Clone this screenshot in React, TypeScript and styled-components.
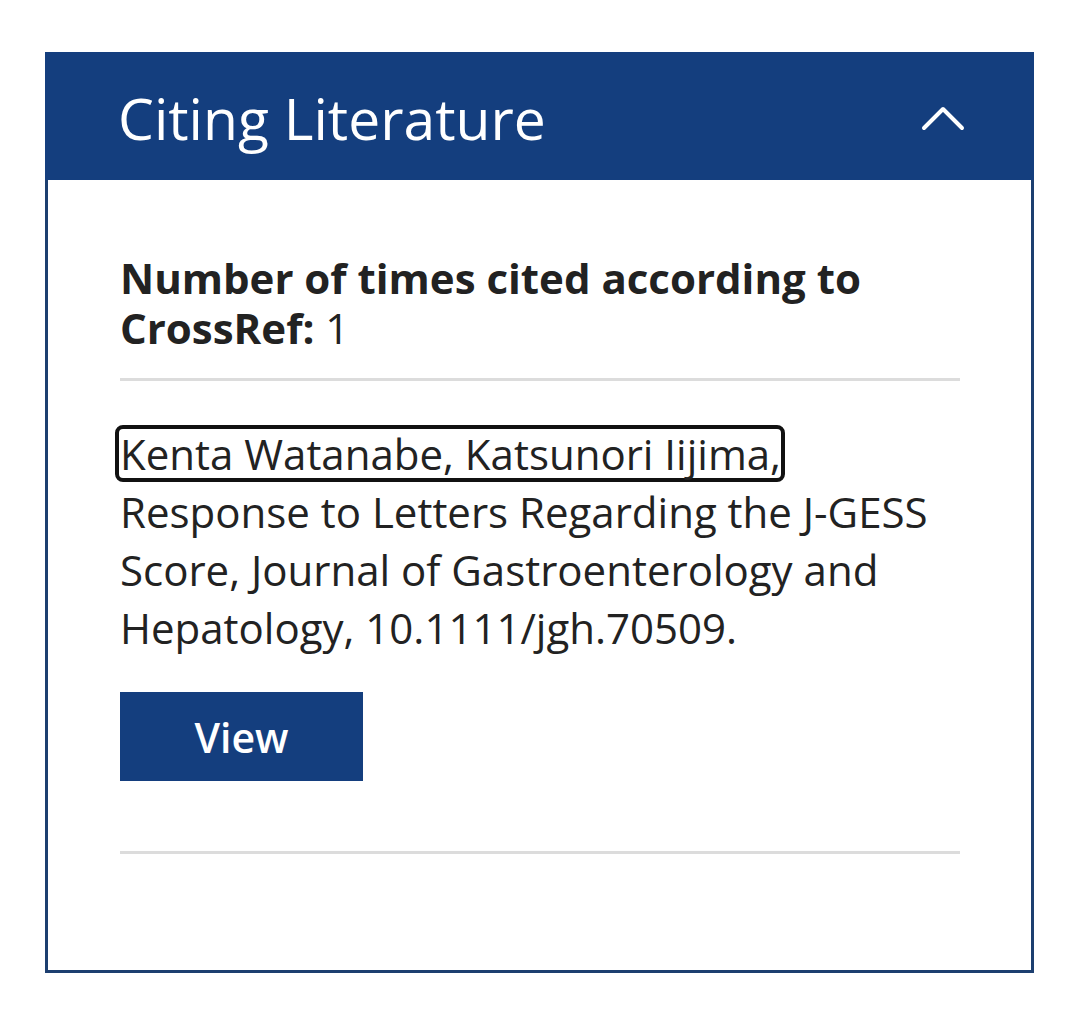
import { createGlobalStyle } from 'styled-components';
import styled from 'styled-components';

const GlobalStyle = createGlobalStyle`
  html, body {
    margin: 0;
    padding: 0;
    background: #ffffff;
  }
  body {
    font-family: 'Open Sans', 'Noto Sans', sans-serif;
    color: #222222;
  }
`;

const Page = styled.div`
  padding: 52px 46px 40px 45px;
`;

const Card = styled.section`
  border: 3px solid #1d3f70;
  background: #ffffff;
`;

const Header = styled.header`
  display: flex;
  align-items: center;
  justify-content: space-between;
  height: 125px;
  margin: -3px -3px 0 -3px;
  padding: 3px 67px 0 73px;
  background: #143e7e;
`;

const Title = styled.h2`
  margin: 0;
  font-size: 57px;
  font-weight: 400;
  color: #ffffff;
`;

const Toggle = styled.button`
  display: flex;
  align-items: center;
  justify-content: center;
  width: 48px;
  height: 40px;
  padding: 0;
  border: none;
  background: transparent;
  cursor: pointer;
`;

const Body = styled.div`
  padding: 73px 71px 116px 72px;
`;

const CountLine = styled.p`
  margin: 0;
  font-size: 42px;
  line-height: 50px;
  color: #222222;

  strong {
    font-weight: 700;
  }
`;

const Divider = styled.hr<{ $top: number }>`
  margin: ${p => p.$top}px 0 0 0;
  border: none;
  height: 3px;
  background: #dcdcdc;
`;

const Citation = styled.p`
  margin: 44px 0 0 0;
  font-size: 42px;
  line-height: 58px;
  color: #222222;
`;

const Authors = styled.a`
  display: inline-block;
  line-height: 49px;
  color: inherit;
  text-decoration: none;
  border: 4px solid #111111;
  border-radius: 8px;
  padding: 0 0 0 1px;
  margin-left: -5px;
`;

const ViewButton = styled.button`
  display: block;
  width: 243px;
  height: 89px;
  margin-top: 35px;
  border: none;
  background: #143e7e;
  color: #ffffff;
  font-family: inherit;
  font-size: 41px;
  font-weight: 600;
  cursor: pointer;
`;

export default function App() {
  return (
    <>
      <GlobalStyle />
      <Page>
        <Card>
          <Header>
            <Title>Citing Literature</Title>
            <Toggle aria-label="Collapse">
              <svg width="46" height="30" viewBox="0 0 46 30">
                <polyline
                  points="4,25 23,6 42,25"
                  fill="none"
                  stroke="#ffffff"
                  strokeWidth="4"
                  strokeLinecap="round"
                  strokeLinejoin="round"
                />
              </svg>
            </Toggle>
          </Header>
          <Body>
            <CountLine>
              <strong>Number of times cited according to CrossRef:</strong> 1
            </CountLine>
            <Divider $top={25} />
            <Citation>
              <Authors href="#">Kenta Watanabe, Katsunori Iijima,</Authors> Response to Letters
              Regarding the J-GESS Score, Journal of Gastroenterology and Hepatology,
              10.1111/jgh.70509.
            </Citation>
            <ViewButton>View</ViewButton>
            <Divider $top={70} />
          </Body>
        </Card>
      </Page>
    </>
  );
}
